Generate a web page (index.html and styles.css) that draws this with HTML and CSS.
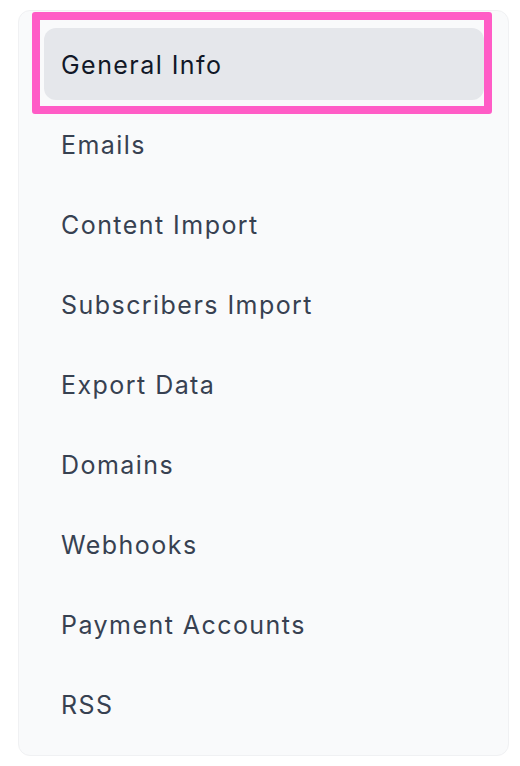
FILE: index.html
```html
<!DOCTYPE html>
<html>
<head>
<meta charset="utf-8">
<link rel="stylesheet" href="styles.css">
</head>
<body>
<nav class="sidebar">
  <a class="item active">General Info</a>
  <a class="item">Emails</a>
  <a class="item">Content Import</a>
  <a class="item">Subscribers Import</a>
  <a class="item">Export Data</a>
  <a class="item">Domains</a>
  <a class="item">Webhooks</a>
  <a class="item">Payment Accounts</a>
  <a class="item">RSS</a>
</nav>
<div class="highlight"></div>
</body>
</html>
```
FILE: styles.css
```css
html, body {
  margin: 0;
  padding: 0;
  background: #ffffff;
}
body {
  width: 520px;
  height: 766px;
  position: relative;
  font-family: Inter, "Noto Sans", sans-serif;
  padding: 10px 10px 0 18px;
  box-sizing: border-box;
}
.sidebar {
  width: 491px;
  box-sizing: border-box;
  background: #f9fafb;
  border: 1px solid #f0f1f3;
  border-radius: 12px;
  padding: 17px 24px 15px 25px;
  display: flex;
  flex-direction: column;
  gap: 8px;
}
.item {
  height: 72px;
  box-sizing: border-box;
  display: flex;
  align-items: center;
  padding: 1px 16px 0 17px;
  border-radius: 12px;
  font-size: 25px;
  font-weight: 400;
  letter-spacing: 1.45px;
  color: #374151;
  text-decoration: none;
}
.item.active {
  background: #e5e7eb;
  color: #111827;
}
.highlight {
  position: absolute;
  left: 32px;
  top: 12px;
  width: 460px;
  height: 102px;
  box-sizing: border-box;
  border: 8px solid #ff5cc6;
  border-radius: 3px;
}
```
